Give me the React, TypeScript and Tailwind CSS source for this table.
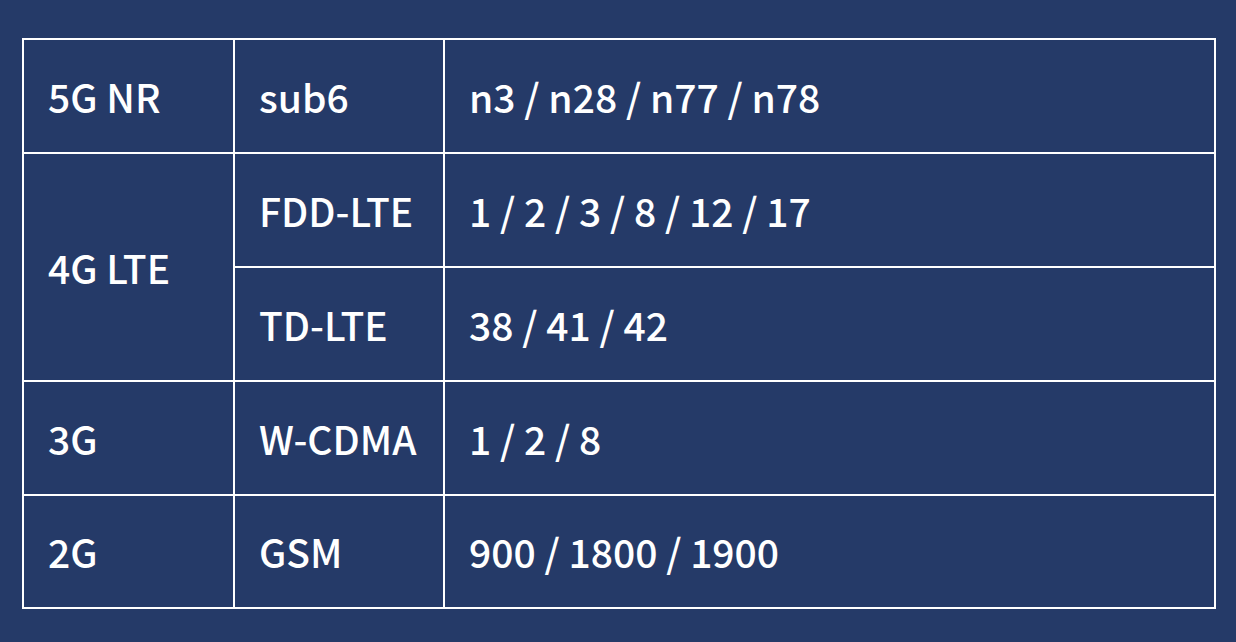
const rows: { gen: string; span?: number; items: [string, string][] }[] = [
  { gen: "5G NR", items: [["sub6", "n3 / n28 / n77 / n78"]] },
  {
    gen: "4G LTE",
    items: [
      ["FDD-LTE", "1 / 2 / 3 / 8 / 12 / 17"],
      ["TD-LTE", "38 / 41 / 42"],
    ],
  },
  { gen: "3G", items: [["W-CDMA", "1 / 2 / 8"]] },
  { gen: "2G", items: [["GSM", "900 / 1800 / 1900"]] },
]

const cell = "bg-[#253a68] flex items-center pl-[24px]"

const App = () => {
  return (
    <div
      className="w-[1236px] h-[642px] bg-[#253a68] pt-[38px] pl-[22px] text-white text-[39px] font-medium leading-none"
      style={{ fontFamily: '"Noto Sans CJK JP", "Noto Sans", sans-serif' }}
    >
      <div className="w-[1194px] grid grid-cols-[209px_208px_1fr] grid-rows-[112px_112px_112px_112px_111px] gap-[2px] p-[2px] bg-white">
        {rows.map((r) =>
          r.items.map(([tech, bands], i) => (
            <>
              {i === 0 && (
                <div
                  key={r.gen}
                  className={r.items.length > 1 ? `${cell} row-span-2` : cell}
                >
                  {r.gen}
                </div>
              )}
              <div key={tech} className={cell}>{tech}</div>
              <div key={tech + "b"} className={cell}>{bands}</div>
            </>
          ))
        )}
      </div>
    </div>
  )
}

export default App
